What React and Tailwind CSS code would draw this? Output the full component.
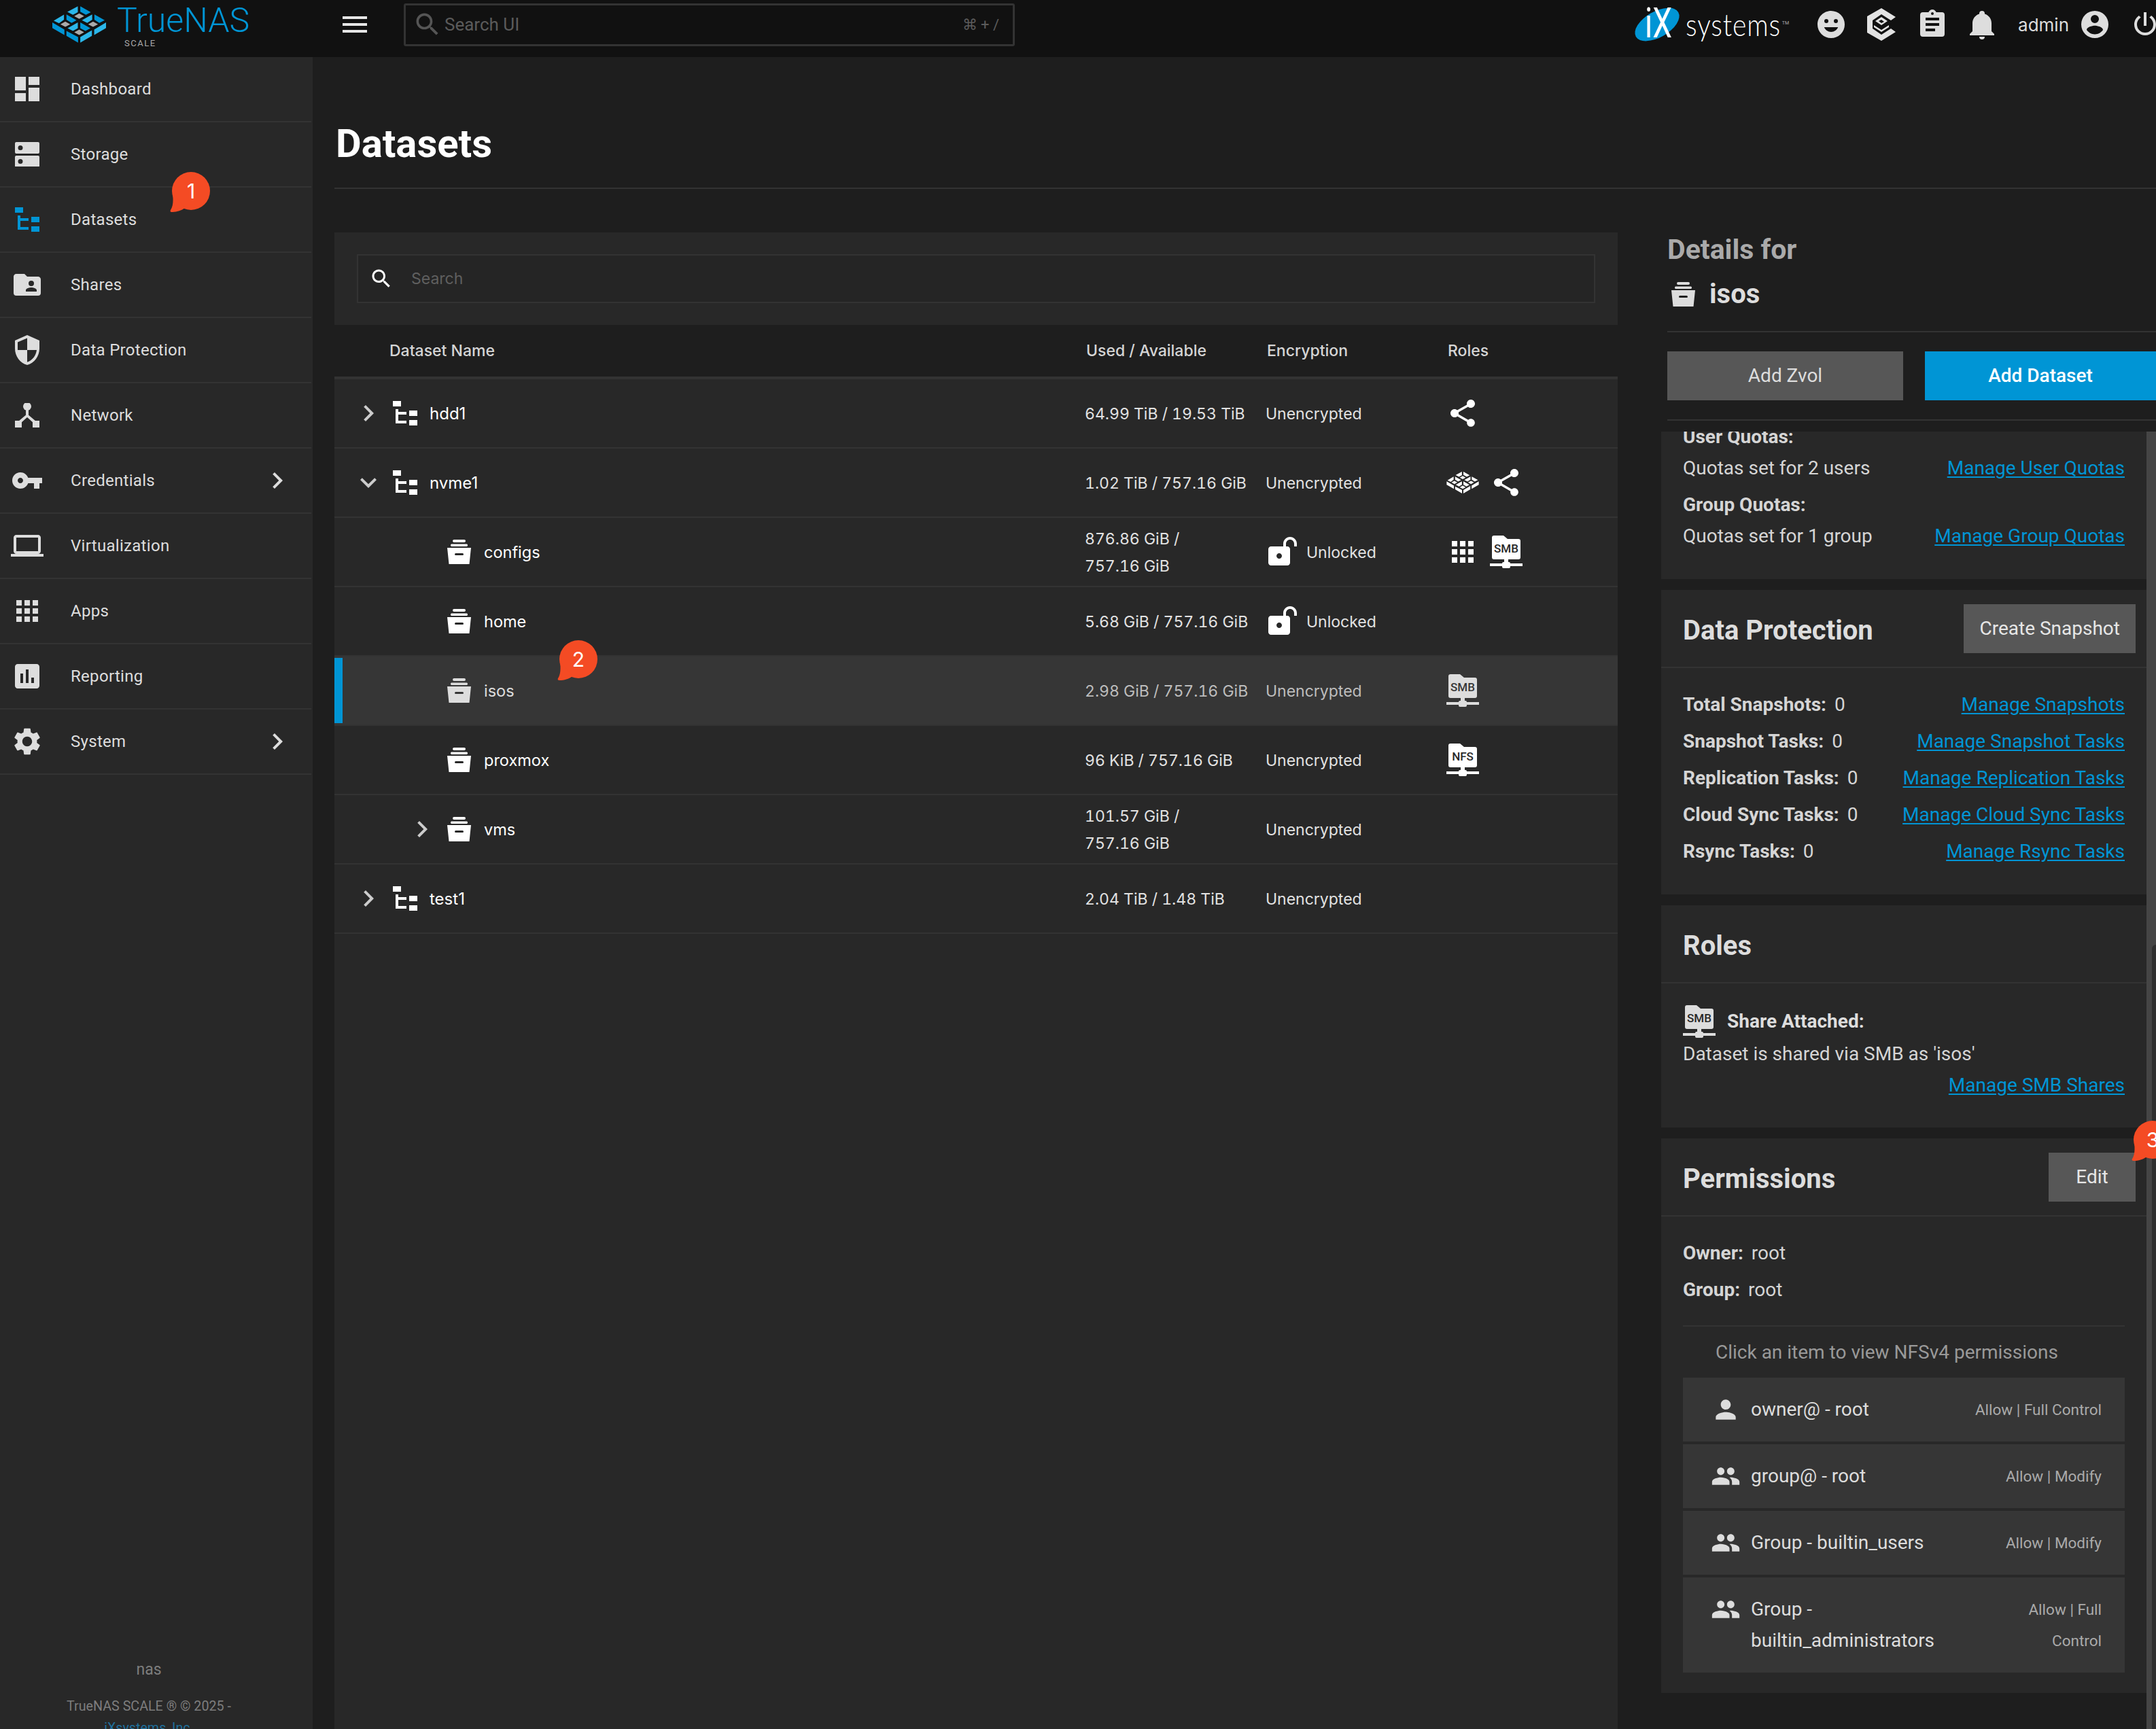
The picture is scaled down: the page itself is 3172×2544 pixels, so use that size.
import React from "react";

const Icon = ({ d, className = "w-12 h-12", evenodd }) => (
  <svg viewBox="0 0 24 24" className={`${className} shrink-0`} fill="currentColor">
    <path d={d} fillRule={evenodd ? "evenodd" : "nonzero"} />
  </svg>
);

const paths = {
  dashboard: "M13,3V9H21V3M13,21H21V11H13M3,21H11V15H3M3,13H11V3H3V13Z",
  shares: "M19,17H11V16C11,14.67 13.67,14 15,14C16.33,14 19,14.67 19,16M15,9A2,2 0 0,1 17,11A2,2 0 0,1 15,13A2,2 0 0,1 13,11A2,2 0 0,1 15,9M20,6H12L10,4H4C2.89,4 2,4.89 2,6V18A2,2 0 0,0 4,20H20A2,2 0 0,0 22,18V8C22,6.89 21.1,6 20,6Z",
  security: "M12,12H19C18.47,16.11 15.72,19.78 12,20.92V12H5V6.3L12,3.19M12,1L3,5V11C3,16.55 6.84,21.73 12,23C17.16,21.73 21,16.55 21,11V5L12,1Z",
  key: "M12.65 10C11.83 7.67 9.61 6 7 6c-3.31 0-6 2.69-6 6s2.69 6 6 6c2.61 0 4.83-1.67 5.65-4H17v4h4v-4h2v-4H12.65zM7 14c-1.1 0-2-.9-2-2s.9-2 2-2 2 .9 2 2-.9 2-2 2z",
  laptop: "M20 18c1.1 0 1.99-.9 1.99-2L22 6c0-1.1-.9-2-2-2H4c-1.1 0-2 .9-2 2v10c0 1.1.9 2 2 2H0v2h24v-2h-4zM4 6h16v10H4V6z",
  apps: "M4 8h4V4H4v4zm6 12h4v-4h-4v4zm-6 0h4v-4H4v4zm0-6h4v-4H4v4zm6 0h4v-4h-4v4zm6-10v4h4V4h-4zm-6 4h4V4h-4v4zm6 6h4v-4h-4v4zm0 6h4v-4h-4v4z",
  report: "M19 3H5c-1.1 0-2 .9-2 2v14c0 1.1.9 2 2 2h14c1.1 0 2-.9 2-2V5c0-1.1-.9-2-2-2zM9 17H7v-7h2v7zm4 0h-2V7h2v10zm4 0h-2v-4h2v4z",
  gear: "M19.14 12.94c.04-.3.06-.61.06-.94 0-.32-.02-.64-.07-.94l2.03-1.58c.18-.14.23-.41.12-.61l-1.92-3.32c-.12-.22-.37-.29-.59-.22l-2.39.96c-.5-.38-1.03-.7-1.62-.94l-.36-2.54c-.04-.24-.24-.41-.48-.41h-3.84c-.24 0-.43.17-.47.41l-.36 2.54c-.59.24-1.13.57-1.62.94l-2.39-.96c-.22-.08-.47 0-.59.22L2.74 8.87c-.12.21-.08.47.12.61l2.03 1.58c-.05.3-.09.63-.09.94s.02.64.07.94l-2.03 1.58c-.18.14-.23.41-.12.61l1.92 3.32c.12.22.37.29.59.22l2.39-.96c.5.38 1.03.7 1.62.94l.36 2.54c.05.24.24.41.48.41h3.84c.24 0 .44-.17.47-.41l.36-2.54c.59-.24 1.13-.56 1.62-.94l2.39.96c.22.08.47 0 .59-.22l1.92-3.32c.12-.22.07-.47-.12-.61l-2.01-1.58zM12 15.6c-1.98 0-3.6-1.62-3.6-3.6s1.62-3.6 3.6-3.6 3.6 1.62 3.6 3.6-1.62 3.6-3.6 3.6z",
  right: "M8.59 16.59L13.17 12 8.59 7.41 10 6l6 6-6 6z",
  down: "M7.41 8.59L12 13.17l4.59-4.58L18 10l-6 6-6-6z",
  search: "M15.5 14h-.79l-.28-.27C15.41 12.59 16 11.11 16 9.5 16 5.91 13.09 3 9.5 3S3 5.91 3 9.5 5.91 16 9.5 16c1.61 0 3.09-.59 4.23-1.57l.27.28v.79l5 4.99L20.49 19l-4.99-5zm-6 0C7.01 14 5 11.99 5 9.5S7.01 5 9.5 5 14 7.01 14 9.5 11.99 14 9.5 14z",
  menu: "M3 18h18v-2H3v2zm0-5h18v-2H3v2zm0-7v2h18V6H3z",
  share: "M18 16.08c-.76 0-1.44.3-1.96.77L8.91 12.7c.05-.23.09-.46.09-.7s-.04-.47-.09-.7l7.05-4.11c.54.5 1.25.81 2.04.81 1.66 0 3-1.34 3-3s-1.34-3-3-3-3 1.34-3 3c0 .24.04.47.09.7L8.04 9.81C7.5 9.31 6.79 9 6 9c-1.66 0-3 1.34-3 3s1.34 3 3 3c.79 0 1.5-.31 2.04-.81l7.12 4.16c-.05.21-.08.43-.08.65 0 1.61 1.31 2.92 2.92 2.92 1.61 0 2.92-1.31 2.92-2.92s-1.31-2.92-2.92-2.92z",
  lock: "M18,1C15.24,1 13,3.24 13,6V8H4C2.9,8 2,8.89 2,10V20C2,21.11 2.9,22 4,22H16C17.11,22 18,21.11 18,20V10C18,8.9 17.1,8 16,8H15V6C15,4.34 16.34,3 18,3C19.66,3 21,4.34 21,6V8H23V6C23,3.24 20.76,1 18,1M10,13C11.1,13 12,13.9 12,15C12,16.1 11.1,17 10,17C8.9,17 8,16.1 8,15C8,13.9 8.9,13 10,13Z",
  person: "M12 12c2.21 0 4-1.79 4-4s-1.79-4-4-4-4 1.79-4 4 1.79 4 4 4zm0 2c-2.67 0-8 1.34-8 4v2h16v-2c0-2.66-5.33-4-8-4z",
  people: "M16 11c1.66 0 2.99-1.34 2.99-3S17.66 5 16 5c-1.66 0-3 1.34-3 3s1.34 3 3 3zm-8 0c1.66 0 2.99-1.34 2.99-3S9.66 5 8 5C6.34 5 5 6.34 5 8s1.34 3 3 3zm0 2c-2.33 0-7 1.17-7 3.5V19h14v-2.5c0-2.33-4.67-3.5-7-3.5zm8 0c-.29 0-.62.02-.97.05 1.16.84 1.97 1.97 1.97 3.45V19h6v-2.5c0-2.33-4.67-3.5-7-3.5z",
  smile: "M12,17.5C14.33,17.5 16.3,16.04 17.11,14H6.89C7.69,16.04 9.67,17.5 12,17.5M8.5,11A1.5,1.5 0 0,0 10,9.5A1.5,1.5 0 0,0 8.5,8A1.5,1.5 0 0,0 7,9.5A1.5,1.5 0 0,0 8.5,11M15.5,11A1.5,1.5 0 0,0 17,9.5A1.5,1.5 0 0,0 15.5,8A1.5,1.5 0 0,0 14,9.5A1.5,1.5 0 0,0 15.5,11M12,2C6.47,2 2,6.5 2,12A10,10 0 0,0 12,22A10,10 0 0,0 22,12A10,10 0 0,0 12,2Z",
  clipboard: "M17,9H7V7H17M17,13H7V11H17M14,17H7V15H14M12,3A1,1 0 0,1 13,4A1,1 0 0,1 12,5A1,1 0 0,1 11,4A1,1 0 0,1 12,3M19,3H14.82C14.4,1.84 13.3,1 12,1C10.7,1 9.6,1.84 9.18,3H5A2,2 0 0,0 3,5V19A2,2 0 0,0 5,21H19A2,2 0 0,0 21,19V5A2,2 0 0,0 19,3Z",
  bell: "M21,19V20H3V19L5,17V11C5,7.9 7.03,5.17 10,4.29C10,4.19 10,4.1 10,4A2,2 0 0,1 12,2A2,2 0 0,1 14,4C14,4.1 14,4.19 14,4.29C16.97,5.17 19,7.9 19,11V17L21,19M14,21A2,2 0 0,1 12,23A2,2 0 0,1 10,21",
  account: "M12,19.2C9.5,19.2 7.29,17.92 6,16C6.03,14 10,12.9 12,12.9C14,12.9 17.97,14 18,16C16.71,17.92 14.5,19.2 12,19.2M12,5A3,3 0 0,1 15,8A3,3 0 0,1 12,11A3,3 0 0,1 9,8A3,3 0 0,1 12,5M12,2A10,10 0 0,0 2,12A10,10 0 0,0 12,22A10,10 0 0,0 22,12A10,10 0 0,0 12,2Z",
  power: "M16.56,5.44L15.11,6.89C16.84,7.94 18,9.83 18,12A6,6 0 0,1 12,18A6,6 0 0,1 6,12C6,9.83 7.16,7.94 8.88,6.88L7.44,5.44C5.36,6.88 4,9.28 4,12A8,8 0 0,0 12,20A8,8 0 0,0 20,12C20,9.28 18.64,6.88 16.56,5.44M13,3H11V13H13",
};

const TreeIcon = ({ className = "w-9 h-9" }) => (
  <svg viewBox="0 0 36 36" className={`${className} shrink-0`} fill="currentColor">
    <rect x="0" y="0" width="12" height="8" />
    <rect x="4" y="12" width="4" height="21" />
    <rect x="4" y="16" width="16" height="4" />
    <rect x="4" y="29" width="16" height="4" />
    <rect x="24" y="14" width="12" height="8" />
    <rect x="24" y="28" width="12" height="8" />
  </svg>
);

const StorageIcon = () => (
  <svg viewBox="0 0 36 36" className="w-9 h-9 shrink-0">
    <path fillRule="evenodd" fill="currentColor" d="M2 0h32a2 2 0 0 1 2 2v13a2 2 0 0 1-2 2H2a2 2 0 0 1-2-2V2a2 2 0 0 1 2-2zM8 5a3.5 3.5 0 1 0 0 7 3.5 3.5 0 0 0 0-7zM2 20h32a2 2 0 0 1 2 2v13a2 2 0 0 1-2 2H2a2 2 0 0 1-2-2V22a2 2 0 0 1 2-2zM8 25a3.5 3.5 0 1 0 0 7 3.5 3.5 0 0 0 0-7z" />
  </svg>
);

const NetworkIcon = () => (
  <svg viewBox="0 0 36 36" className="w-9 h-9 shrink-0" fill="currentColor">
    <circle cx="18" cy="5" r="6" />
    <rect x="16" y="8" width="4" height="12" />
    <path d="M18 16l13 11-3 3-10-9-10 9-3-3z" />
    <rect x="0" y="26" width="10" height="10" />
    <rect x="26" y="26" width="10" height="10" />
  </svg>
);

const ArchiveIcon = ({ className = "", slot = "#282828" }) => (
  <svg viewBox="0 0 36 36" className={`w-9 h-9 shrink-0 ${className}`}>
    <path fill="currentColor" d="M10 0h15a2 2 0 0 1 0 4H10a2 2 0 0 1 0-4zM6 6.5h23a2 2 0 0 1 0 3.5H6a2 2 0 0 1 0-3.5zM0 12h35l-2.5 24h-30z" />
    <rect x="11" y="20" width="13" height="3" rx="1.5" fill={slot} />
  </svg>
);

const ShareFolder = ({ label, slot = "#282828", className = "" }) => (
  <svg viewBox="0 0 48 48" className={`w-12 h-12 shrink-0 ${className}`}>
    <path fill="currentColor" d="M3 3a3 3 0 0 1 3-3h14l6 5h16a3 3 0 0 1 3 3v24a3 3 0 0 1-3 3H6a3 3 0 0 1-3-3z" />
    <rect x="0" y="41" width="48" height="4" fill="currentColor" />
    <rect x="21" y="34" width="6" height="8" fill="currentColor" />
    <rect x="18" y="39" width="12" height="9" rx="2" fill="currentColor" />
    <text x="24" y="25" textAnchor="middle" fontSize="17" fontFamily="Roboto, sans-serif" fontWeight="500" fill={slot}>{label}</text>
  </svg>
);

// four cell lattice from the TrueNAS mark, drawn in a 330x204 box
const LogoMark = ({ className, light = "#2bb7ea", dark = "#0095d5", core = "#aaaaaa" }) => (
  <svg viewBox="28 14 244 170" className={className}>
    <g fill={light}>
      <polygon points="97,43 144,18 144,44 122,56" />
      <polygon points="36,82 82,55 82,78 60,94" />
      <polygon points="98,116 144,90 144,116 122,128" />
      <polygon points="162,80 208,54 208,78 186,92" />
      <polygon points="217,122 270,90 270,115 217,146" />
      <polygon points="155,155 207,125 207,150 155,180" />
    </g>
    <g fill={dark}>
      <polygon points="155,18 202,44 180,56 155,42" />
      <polygon points="93,54 138,80 116,92 93,78" />
      <polygon points="155,90 200,116 178,128 155,116" />
      <polygon points="218,54 264,80 240,92 218,78" />
      <polygon points="30,90 84,122 84,146 30,115" />
      <polygon points="93,128 145,155 145,180 93,150" />
    </g>
    <g fill={core}>
      <polygon points="150,50 172,62 150,74 128,62" />
      <polygon points="88,86 110,98 88,110 66,98" />
      <polygon points="212,86 234,98 212,110 190,98" />
      <polygon points="150,122 172,134 150,146 128,134" />
    </g>
  </svg>
);

const Badge = ({ n, className }) => (
  <div className={`absolute z-10 w-[59px] h-[59px] ${className}`}>
    <svg viewBox="0 0 59 59" className="w-[59px] h-[59px]" fill="#f44b24">
      <circle cx="31" cy="28" r="28" />
      <path d="M4 30C5 42 5 50 1 56C0 58 1 59 3 59C10 59 17 57 22 53Z" />
    </svg>
    <div className="absolute left-[3px] top-0 w-14 h-14 flex items-center justify-center text-[30px] text-white font-[Inter,sans-serif]">{n}</div>
  </div>
);

const nav = [
  { label: "Dashboard", icon: <Icon d={paths.dashboard} /> },
  { label: "Storage", icon: <div className="w-12 h-12 flex items-center justify-center"><StorageIcon /></div> },
  { label: "Datasets", active: true, icon: <div className="w-12 h-12 flex items-center justify-center text-[#0095d5]"><TreeIcon /></div> },
  { label: "Shares", icon: <Icon d={paths.shares} /> },
  { label: "Data Protection", icon: <Icon d={paths.security} /> },
  { label: "Network", icon: <div className="w-12 h-12 flex items-center justify-center"><NetworkIcon /></div> },
  { label: "Credentials", more: true, icon: <Icon d={paths.key} /> },
  { label: "Virtualization", icon: <Icon d={paths.laptop} /> },
  { label: "Apps", icon: <Icon d={paths.apps} /> },
  { label: "Reporting", icon: <Icon d={paths.report} /> },
  { label: "System", more: true, icon: <Icon d={paths.gear} /> },
];

const Sidebar = () => (
  <div className="relative w-[460px] shrink-0 bg-[#282828] flex flex-col overflow-hidden">
    {nav.map((item) => (
      <div key={item.label} className="h-[96px] mr-[2px] pl-4 flex items-center border-b-[2px] border-[#333333] text-[#dddddd]">
        {item.icon}
        <span className="ml-10 flex-1 text-[24px] tracking-[0.3px]">{item.label}</span>
        {item.more && <Icon d={paths.right} className="w-12 h-12 mr-[26px]" />}
      </div>
    ))}
    <Badge n="1" className="left-[250px] top-[169px]" />
    <div className="mt-auto pr-[22px] flex flex-col items-center text-[#7d7d7d]">
      <div className="text-[23px] h-[34px] mb-[22px]">nas</div>
      <div className="text-[19.7px] h-[32px]">TrueNAS SCALE ® © 2025 -</div>
      <div className="text-[19.7px] h-[16px] text-[#1f6f9c]">iXsystems, Inc.</div>
    </div>
  </div>
);

const rows = [
  { name: "hdd1", type: "root", open: false, used: "64.99 TiB / 19.53 TiB", enc: "Unencrypted", roles: ["share"] },
  { name: "nvme1", type: "root", open: true, used: "1.02 TiB / 757.16 GiB", enc: "Unencrypted", roles: ["logo", "share"] },
  { name: "configs", type: "child", used: "876.86 GiB /\n757.16 GiB", enc: "Unlocked", roles: ["apps", "SMB"] },
  { name: "home", type: "child", used: "5.68 GiB / 757.16 GiB", enc: "Unlocked", roles: [] },
  { name: "isos", type: "child", selected: true, used: "2.98 GiB / 757.16 GiB", enc: "Unencrypted", roles: ["SMB"] },
  { name: "proxmox", type: "child", used: "96 KiB / 757.16 GiB", enc: "Unencrypted", roles: ["NFS"] },
  { name: "vms", type: "child", open: false, used: "101.57 GiB /\n757.16 GiB", enc: "Unencrypted", roles: [] },
  { name: "test1", type: "root", open: false, used: "2.04 TiB / 1.48 TiB", enc: "Unencrypted", roles: [] },
];

const RoleIcon = ({ role, slot }) => {
  if (role === "share") return <Icon d={paths.share} />;
  if (role === "apps") return <Icon d={paths.apps} />;
  if (role === "logo") return <div className="w-12 h-12 flex items-center justify-center"><LogoMark className="w-12 h-[34px]" light="#ffffff" dark="#ffffff" core="#ffffff" /></div>;
  return <ShareFolder label={role} slot={slot} />;
};

const Row = ({ row }) => {
  const tone = row.selected ? "bg-[#363636] text-[#bdbdbd]" : "bg-[#282828] text-[#e2e2e2]";
  const nameTone = row.selected ? "text-[#dddddd]" : "text-white";
  const slot = row.selected ? "#363636" : "#282828";
  const hasChevron = row.open !== undefined;
  return (
    <div className={`relative h-[102px] grid grid-cols-[1104px_266px_266px_1fr] items-center border-b-[2px] border-[#333333] text-[23px] ${tone}`}>
      {row.selected && <div className="absolute left-0 top-[2px] bottom-[2px] w-3 bg-[#0095d5]" />}
      <div className={`flex items-center ${nameTone} ${row.type === "root" ? "pl-[26px]" : "pl-[105px]"}`}>
        <div className="w-12 h-12 shrink-0 text-[#cccccc]">
          {hasChevron && <Icon d={row.open ? paths.down : paths.right} />}
        </div>
        {row.type === "root" ? (
          <>
            <div className="ml-3 w-9"><TreeIcon /></div>
            <span className="ml-[18px] mt-[2px] text-[24px]">{row.name}</span>
          </>
        ) : (
          <>
            <div className="ml-[13px] w-9"><ArchiveIcon slot={slot} /></div>
            <span className="ml-[18px] mt-[2px] text-[23.5px]">{row.name}</span>
          </>
        )}
      </div>
      <div className="mt-[2px] leading-[40px] tabular-nums whitespace-pre-line">{row.used}</div>
      <div className="flex items-center">
        {row.enc === "Unlocked" && <Icon d={paths.lock} evenodd className="w-12 h-12 mr-[12px] text-white" />}
        <span className="mt-[2px]">{row.enc}</span>
      </div>
      <div className="flex items-center gap-4">
        {row.roles.map((r) => <div key={r} className={row.selected ? "text-[#dddddd]" : "text-white"}><RoleIcon role={r} slot={slot} /></div>)}
      </div>
      {row.selected && <Badge n="2" className="left-[328px] top-[-24px]" />}
    </div>
  );
};

const DatasetTable = () => (
  <div className="w-[1888px] shrink-0 bg-[#282828] font-[Inter,sans-serif]">
    <div className="h-[136px] px-[33px] flex items-center">
      <div className="w-full h-[72px] border-[2px] border-[#333333] bg-[#252525] pl-[16px] flex items-center">
        <Icon d={paths.search} className="w-9 h-9 text-white" />
        <span className="ml-[26px] text-[23px] text-[#5f5f5f]">Search</span>
      </div>
    </div>
    <div className="h-[80px] bg-[#1e1e1e] border-b-[4px] border-[#333333] grid grid-cols-[1106px_266px_266px_1fr] items-center text-[23px] font-medium text-[#d5d5d5]">
      <div className="pl-[81px]">Dataset Name</div>
      <div>Used / Available</div>
      <div>Encryption</div>
      <div>Roles</div>
    </div>
    {rows.map((r) => <Row key={r.name} row={r} />)}
  </div>
);

const CardTitle = ({ children, action }) => (
  <div className="h-[115px] shrink-0 pl-8 pr-4 flex items-center justify-between border-b-[2px] border-[#333333]">
    <span className="pt-[6px] text-[40px] font-bold text-[#dddddd]">{children}</span>
    {action && <button className="min-w-[128px] h-[72px] px-[23px] bg-[#575757] text-[28px] font-normal text-[#e6e6e6]">{action}</button>}
  </div>
);

const Link = ({ children }) => <a className="text-[#0095d5] underline underline-offset-[3px]">{children}</a>;

const protection = [
  ["Total Snapshots:", "0", "Manage Snapshots"],
  ["Snapshot Tasks:", "0", "Manage Snapshot Tasks"],
  ["Replication Tasks:", "0", "Manage Replication Tasks"],
  ["Cloud Sync Tasks:", "0", "Manage Cloud Sync Tasks"],
  ["Rsync Tasks:", "0", "Manage Rsync Tasks"],
];

const PermItem = ({ icon, name, perm, tall }) => (
  <div className={`bg-[#363636] pl-[39px] pr-[34px] py-6 flex items-start justify-between leading-[46px] ${tall ? "h-[140px]" : "h-[94px]"}`}>
    <div className="flex items-start">
      <div className="w-12 h-[46px] flex items-center justify-center text-[#dddddd]"><Icon d={icon} className="w-11 h-11" /></div>
      <div className="ml-[13px] text-[28px] text-[#dddddd]">{name}</div>
    </div>
    <div className="text-[22.5px] text-[#aaaaaa] text-right">{perm}</div>
  </div>
);

const Details = () => (
  <div className="relative flex-1 flex flex-col min-w-0 ml-[64px] overflow-hidden text-[28px] text-[#d5d5d5]">
    <div className="ml-[9px] h-[147px] shrink-0 border-b-[2px] border-[#333333]">
      <div className="h-[51px] flex items-center text-[41px] font-bold text-[#aaaaaa]">Details for</div>
      <div className="h-[79px] flex items-center text-[40px] font-bold text-[#dddddd]">
        <ArchiveIcon className="ml-[6px] mr-[20px]" slot="#1e1e1e" />
        isos
      </div>
    </div>
    <div className="ml-[9px] h-[130px] shrink-0 pt-[28px] flex gap-8 border-b-[2px] border-[#333333]">
      <button className="w-[347px] h-[72px] bg-[#575757] text-[#dddddd]">Add Zvol</button>
      <button className="flex-1 h-[72px] bg-[#0095d5] text-white font-medium">Add Dataset</button>
    </div>
    <div className="mt-4 flex flex-1 min-h-0">
      <div className="w-[714px] flex flex-col gap-4">
        <div className="h-[217px] shrink-0 bg-[#282828] overflow-hidden px-8">
          <div className="-mt-[15px] leading-[46px]">
            <div className="font-bold">User Quotas:</div>
            <div className="flex justify-between"><span>Quotas set for 2 users</span><Link>Manage User Quotas</Link></div>
            <div className="mt-[8px] font-bold">Group Quotas:</div>
            <div className="flex justify-between"><span>Quotas set for 1 group</span><Link>Manage Group Quotas</Link></div>
          </div>
        </div>
        <div className="h-[448px] shrink-0 bg-[#282828]">
          <CardTitle action="Create Snapshot">Data Protection</CardTitle>
          <div className="px-8 pt-[27px]">
            {protection.map(([label, value, link]) => (
              <div key={label} className="h-[54px] flex items-center justify-between">
                <span><b className="font-bold mr-3">{label}</b>{value}</span>
                <Link>{link}</Link>
              </div>
            ))}
          </div>
        </div>
        <div className="h-[327px] shrink-0 bg-[#282828]">
          <CardTitle>Roles</CardTitle>
          <div className="px-8 pt-[32px]">
            <div className="h-12 flex items-center font-bold text-[#dddddd]">
              <ShareFolder label="SMB" className="mr-[17px]" />
              Share Attached:
            </div>
            <div className="h-12 flex items-center">Dataset is shared via SMB as 'isos'</div>
            <div className="h-[44px] flex items-center justify-end"><Link>Manage SMB Shares</Link></div>
          </div>
        </div>
        <div className="h-[816px] shrink-0 bg-[#282828]">
          <CardTitle action="Edit">Permissions</CardTitle>
          <div className="px-8 pt-[27px]">
            <div className="h-[54px] flex items-center"><b className="font-bold mr-3">Owner:</b>root</div>
            <div className="h-[54px] flex items-center"><b className="font-bold mr-3">Group:</b>root</div>
            <div className="mt-[25px] h-[2px] bg-[#333333]" />
            <div className="h-[75px] flex items-center pl-12 text-[#999999]">Click an item to view NFSv4 permissions</div>
            <div className="flex flex-col gap-1">
              <PermItem icon={paths.person} name="owner@ - root" perm="Allow | Full Control" />
              <PermItem icon={paths.people} name="group@ - root" perm="Allow | Modify" />
              <PermItem icon={paths.people} name="Group - builtin_users" perm="Allow | Modify" />
              <PermItem tall icon={paths.people} name={<>Group -<br />builtin_administrators</>} perm={<>Allow | Full<br />Control</>} />
            </div>
          </div>
        </div>
      </div>
      <div className="w-[14px] shrink-0 flex flex-col">
        <div className="h-[755px] bg-[#454545]" />
        <div className="flex-1 flex bg-[#454545]">
          <div className="w-2" />
          <div className="flex-1 bg-[#2f2f2f] rounded-tl-lg" />
        </div>
      </div>
    </div>
    <Badge n="3" className="left-[692px] top-[1307px]" />
  </div>
);

const TopBar = () => (
  <div className="h-[84px] shrink-0 bg-[#111111] flex items-center pb-3 overflow-hidden text-[#dddddd]">
    <div className="w-[498px] shrink-0 pl-[76px] flex items-start relative">
      <LogoMark className="w-[81px] h-[56px]" />
      <div className="ml-[15px] -mt-[3px] relative">
        <div className="text-[50px] leading-[50px] font-light text-[#0095d5]">TrueNAS</div>
        <div className="absolute left-[11px] top-[49px] text-[13px] tracking-[1.5px] text-[#aaaaaa]">SCALE</div>
      </div>
    </div>
    <Icon d={paths.menu} className="w-12 h-12 text-[#e6e6e6]" />
    <div className="ml-12 w-[899px] h-[63px] border-[3px] border-[#333333] rounded-[3px] flex items-center pl-[10px] pr-5">
      <Icon d={paths.search} className="w-[44px] h-[44px] text-[#555555]" />
      <span className="ml-[3px] flex-1 text-[26px] text-[#5b5b5b]">Search UI</span>
      <span className="text-[22px] text-[#5b5b5b]">⌘ + /</span>
    </div>
    <div className="ml-auto flex items-center">
      <svg viewBox="0 0 68 50" className="w-[68px] h-[50px] shrink-0 overflow-visible">
        <ellipse cx="34" cy="25" rx="36" ry="19" fill="#0095d5" transform="rotate(-30 34 25)" />
        <text x="16" y="44" fontSize="62" fontFamily="Roboto, sans-serif" fontWeight="400" textLength="40" lengthAdjust="spacingAndGlyphs" fill="#ffffff">iX</text>
      </svg>
      <span className="ml-[8px] w-[142px] inline-block origin-left scale-x-[0.85] text-[46px] leading-none font-[Lato,sans-serif] font-light text-white tracking-[1px]">systems</span>
      <span className="self-start mt-[18px] text-[7px] text-[#aaaaaa]">TM</span>
      <Icon d={paths.smile} evenodd className="ml-[38px] w-12 h-12" />
      <svg viewBox="0 0 44 48" className="ml-[28px] w-[44px] h-12 shrink-0" fill="#e2e2e2">
        <path d="M22 0L43 13l-7 5-14-9-13 9v12l13 9 14-9 7 5-21 13L1 36V12z" />
        <path d="M22 13l9 6-9 6-9-6zm0 4l-4 2 4 3 4-2z" fillRule="evenodd" />
        <path d="M11 25l11 7 11-7v3l-11 7-11-7z" />
      </svg>
      <Icon d={paths.clipboard} evenodd className="ml-[29px] w-12 h-12" />
      <Icon d={paths.bell} className="ml-[25px] w-12 h-12" />
      <span className="ml-[29px] text-[26px] text-[#dddddd] font-[Inter,sans-serif]">admin</span>
      <Icon d={paths.account} evenodd className="ml-[14px] w-12 h-12" />
      <Icon d={paths.power} className="ml-[26px] -mr-[8px] w-12 h-12" />
    </div>
  </div>
);

export default function App() {
  return (
    <div className="w-[3172px] h-[2544px] flex flex-col overflow-hidden bg-[#1e1e1e] font-[Roboto,sans-serif]">
      <TopBar />
      <div className="flex flex-1 min-h-0">
        <Sidebar />
        <div className="flex-1 min-w-0 flex flex-col">
          <div className="ml-8 h-[193.5px] shrink-0 pt-[64px] border-b-[2px] border-[#333333] flex items-center">
            <h1 className="pl-[2px] text-[58px] font-bold text-white">Datasets</h1>
          </div>
          <div className="ml-8 mt-[64.5px] flex flex-1 min-h-0">
            <DatasetTable />
            <Details />
          </div>
        </div>
      </div>
    </div>
  );
}
